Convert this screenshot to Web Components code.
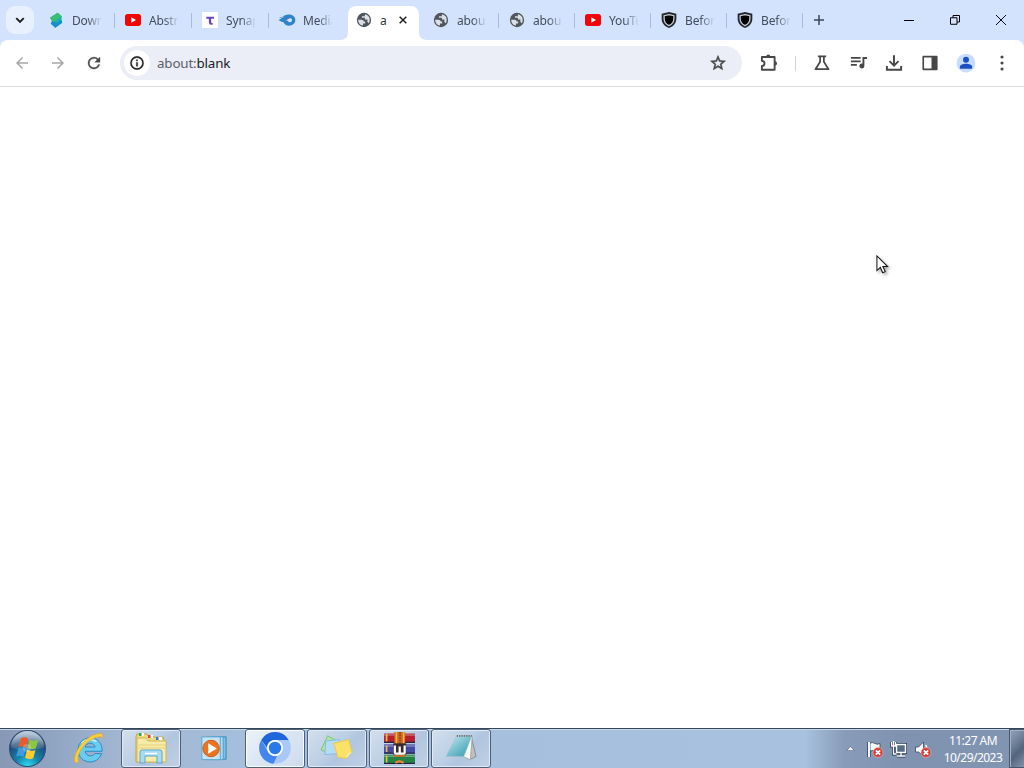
<!DOCTYPE html>
<html lang="en">
<head>
<meta charset="utf-8">
<title>about:blank</title>
<style>
html, body { margin: 0; height: 100%; overflow: hidden; background: #fff; }
body { font-family: "Noto Sans", "Open Sans", sans-serif; }
</style>
</head>
<body>
<desktop-screen></desktop-screen>

<script>
const icons = {
  chevron: `<path d="M7 9.5l5 5 5-5" fill="none" stroke="#1f1f1f" stroke-width="2.6"/>`,
  back: `<path d="M20 11H7.83l5.59-5.59L12 4l-8 8 8 8 1.41-1.41L7.83 13H20v-2z"/>`,
  forward: `<path d="M12 4l-1.41 1.41L16.17 11H4v2h12.17l-5.58 5.59L12 20l8-8z"/>`,
  reload: `<path d="M17.65 6.35A7.96 7.96 0 0 0 12 4a8 8 0 1 0 7.73 10h-2.08A6 6 0 1 1 12 6c1.66 0 3.14.69 4.22 1.78L13 11h7V4z" stroke="currentColor" stroke-width=".4"/>`,
  info: `<path d="M11 7h2v2h-2zm0 4h2v6h-2zm1-9a10 10 0 1 0 0 20 10 10 0 0 0 0-20zm0 18a8 8 0 1 1 0-16 8 8 0 0 1 0 16z" stroke-width=".5" stroke="currentColor"/>`,
  star: `<path d="M22 9.24l-7.19-.62L12 2 9.19 8.63 2 9.24l5.46 4.73L5.82 21 12 17.27 18.18 21l-1.63-7.03zM12 15.4l-3.76 2.27 1-4.28-3.32-2.88 4.38-.38L12 6.1l1.71 4.04 4.38.38-3.32 2.88 1 4.28z" stroke-width=".7" stroke="currentColor"/>`,
  puzzle: `<path d="M2.500 4h17v17h-17v-5q3.500-.5 3.500-3.500T2.500 9z" fill="none" stroke="currentColor" stroke-width="2.500" stroke-linejoin="round"/><path d="M8.300 3.500a2.700 2.700 0 0 1 5.400 0zM20 9.800a2.700 2.700 0 0 1 0 5.400z"/>`,
  flask: `<path d="M6.500 3.200h11M9.500 3.500v6.800L3.300 20.300h17.400L14.500 10.300V3.500" fill="none" stroke="currentColor" stroke-width="2.300" stroke-linejoin="round"/>`,
  queue: `<path d="M2.500 4h13v2.400h-13zM2.500 8.600h13V11h-13zM2.500 13.200h8v2.400h-8zM18 4h6v2.600h-3.500V16a3.300 3.300 0 1 1-2.500-3.200z"/>`,
  download: `<path d="M12 1.500v13.500M6 9.500l6 6 6-6M2.500 16v5h19v-5" fill="none" stroke="currentColor" stroke-width="2.600"/>`,
  panel: `<path d="M3 3.500h18v17H3z" fill="none" stroke="currentColor" stroke-width="2.200" stroke-linejoin="round"/><path d="M14 3h7v18h-7z"/>`,
  profile: `<circle cx="12" cy="12" r="12.500" fill="#c9ddfb"/><circle cx="12" cy="7.600" r="4" fill="#1a50c4"/><path d="M3.800 19.600v-2.400c0-5.500 16.400-5.500 16.400 0v2.400z" fill="#1a50c4"/>`,
  more: `<circle cx="12" cy="4" r="2.100"/><circle cx="12" cy="12" r="2.100"/><circle cx="12" cy="20" r="2.100"/>`,
  plus: `<path d="M12 2v20M2 12h20" stroke="currentColor" stroke-width="3"/>`,
  closeTab: `<path d="M4 4l16 16M20 4L4 20" stroke="#1f1f1f" stroke-width="3.500"/>`,
  minimize: `<path d="M2 13h20" stroke="#000" stroke-width="2"/>`,
  restore: `<path d="M3 7.500h13v13H3zM8 7.500V3h13v13h-5" fill="none" stroke="#000" stroke-width="2"/>`,
  closeWindow: `<path d="M2 2l20 20M22 2L2 22" stroke="#000" stroke-width="1.900"/>`,
  globe: `<circle cx="12" cy="12" r="10.700" fill="#50555e"/><path d="M3.200 11.500h5.300q3 0 3 2.600h2.200v3.200h-3.200v3q-7-1-7.300-8.800z" fill="#dce1e9"/><path d="M13.300 3.500q7.200 1.500 7.300 8.500 0 2.700-1.600 5l-2-2.500.2-3.200h-3.800V8.700H8.900V6.300h4.400z" fill="#dce1e9"/>`,
  softFile: `<path d="M14.500 1l6 5.500-1 5 1 4.500-9.500 7.500-6-6 1-4-3-5z" fill="#16a6b4"/><path d="M14.500 1l6 5.500L8 15.500 3 8.500z" fill="#3cbf72"/><path d="M6 13.500l4 1.500 9.500-6 2 7-10.500 7.500-7-6z" fill="#168fd0"/><path d="M9 15l11.500-8.500-1 5-6 4.500z" fill="#21b39c"/>`,
  youtube: `<rect x="0" y="3" width="24" height="18" rx="4" fill="#f20505"/><path d="M9.500 8l7 4-7 4z" fill="#fff"/>`,
  synapse: `<rect width="24" height="24" rx="1.500" fill="#fff"/><path d="M6.500 7h11.500v3h-4.300V15q0 2 2.300 1.600v2.400q-5.700 1-5.700-3.600V10H6.500z" fill="#6145c1"/>`,
  mediafire: `<path d="M-1 12q4-.5 6-4C8 4 13 3 18 4c4 1 6.500 4 6.500 8 0 5-4 8.500-9.500 8.500-4 0-7-2-8.500-5.500-2 .5-3.500-1-7.500-3z" fill="#2f83c9"/><path d="M9.500 12q3 .5 4.500-1.500c2-2 5.500-1 5.500 1.500 0 3.500-4 4.200-5.500 2.200Q12.500 12.500 9.500 12z" fill="#d3e3fd"/><path d="M1 8.500q4 0 6.500-1" stroke="#6aafe8" stroke-width="2" fill="none"/>`,
  shield: `<path d="M12 0l11 2.500v7.500c0 6.500-4 11-11 14C5 21 1 16.500 1 10V2.500z" fill="#24272d"/><path d="M12 4l7.300 1.500V10c0 5-2.300 8-7.300 10.500C7 18 4.700 15 4.700 10V5.500z" fill="#000" stroke="#c7cfd9" stroke-width="1.900"/>`,

  orb: `<defs><radialGradient id="orbBg" cx=".5" cy="1" r=".95"><stop offset="0" stop-color="#2ee0f0"/><stop offset=".35" stop-color="#1586b0"/><stop offset=".75" stop-color="#1f4a76"/><stop offset="1" stop-color="#7592b2"/></radialGradient><linearGradient id="orbTop" x2="0" y2="1"><stop stop-color="#d5dfeb" stop-opacity=".75"/><stop offset="1" stop-color="#fff" stop-opacity=".05"/></linearGradient></defs>
    <circle cx="18" cy="18" r="17.500" fill="url(#orbBg)" stroke="#304e70"/><path d="M2 17a16 16 0 0 1 32 0q-16 6-32 0z" fill="url(#orbTop)"/>
    <path d="M11.500 8.200Q15 6 18.600 8.400l-2 8.600q-3.500-2.400-7.300-.4z" fill="#ee5a25"/><path d="M20 9.300q4 2.400 8.400.2l-2.200 8.300q-4.200 2-8.200-.4z" fill="#8dc63f"/><path d="M9 18q3.600-2 7.200.3l-2 8q-3.400-2.300-7.200-.5z" fill="#3e9bdd"/><path d="M17.600 19q4 2.400 8.200.4l-2.200 8.200q-4 1.900-8-.6z" fill="#fdca30"/><circle cx="17.500" cy="17.500" r="4" fill="#fff" opacity=".22"/>`,
  explorer: `<path d="M17 5a13 13 0 1 0 12.500 17h-7.200c-2.500 4-10 3-10.300-2.500h18C30.500 11 25 5 17 5zm-5 10c1-5.500 9.500-5.500 10.500 0z" fill="#6accf0" stroke="#2289c7"/><path d="M8 11q6-7 16-2" stroke="#c6efff" stroke-width="1.700" fill="none"/><path d="M1 31C-2 21 13 1 28 .5c3 0 3 3 2.500 5C29 2 20 5 12 12 5 20 3 26 5 31q-2 1.500-4 0z" fill="#f8cf3d" stroke="#d9a01f" stroke-width=".6"/>`,
  folder: `<path d="M2 5l1-3h10l2 3h14l1 3v22H2z" fill="#ecd985" stroke="#c7a445"/><path d="M3 6h9l2 3h18v21H3z" fill="#f7eba8" stroke="#d4b65a"/><path d="M5 2.500h5M14 4.500h5M22 6.500h6" stroke="#fff" stroke-width="3"/><path d="M5 2.500h2.500" stroke="#36a443" stroke-width="3"/><path d="M14 4.500h2.500" stroke="#d6422e" stroke-width="3"/><path d="M22 6.500h2.500" stroke="#3979c9" stroke-width="3"/><path d="M4 13h27M4 16h27" stroke="#e6cf7b"/><path d="M6 31V20q0-2 2-2h18q2 0 2 2v11h-5v-7H11v7z" fill="#a9dcf4" stroke="#56a7d3"/><path d="M11 21.500h12" stroke="#fff" stroke-width="1.500"/>`,
  media: `<path d="M14 4h15v23H14z" fill="#7fbfe0" stroke="#3888b9"/><path d="M10 4h16v23.500H10z" fill="#acdaf0" stroke="#4f9ecb"/><path d="M4 4h19v23.500H4z" fill="#c5e4f3" stroke="#5ba5cd"/><circle cx="13.500" cy="16" r="8.500" fill="#ec7421" stroke="#cb5b18"/><path d="M10.500 10.500l9 5.500-9 5.500z" fill="#fff"/>`,
  chromium: `<circle cx="16" cy="16" r="15.800" fill="#a9c8f8"/><path d="M2.300 8A15.800 15.800 0 0 1 29.700 8H16q-7 0-7.800 8z" fill="#1f66da"/><path d="M2.300 8L9 19.800q3 5 9 4.200L14.500 31.700A15.800 15.800 0 0 1 2.300 8z" fill="#4486ee"/><circle cx="16" cy="16" r="8" fill="#fff"/><circle cx="16" cy="16" r="6.200" fill="#2a79ea"/>`,
  notes: `<path d="M6 3l9 5-6 14-10-4z" fill="#b5e3a6" stroke="#79c274"/><path d="M4 8.500l14-1.500 1 15L3 23z" fill="#b5dcf5" stroke="#80bce2"/><path d="M12.500 11l16-4 3.500 13q-4 3-6 7L17 26z" fill="#fae268" stroke="#e8c84a"/><path d="M26 27q0-5 6-7z" fill="#fff2a5"/>`,
  archive: `<path d="M1 1.500h30v9H1z" fill="#b5202f"/><path d="M1 12h30v9H1z" fill="#454aa6"/><path d="M1 22h30v9H1z" fill="#218348"/><path d="M1 3h30M1 13.500h30M1 23.500h30" stroke="#fff" stroke-opacity=".32" stroke-width="1.500"/><path d="M1 10h30M1 20.500h30M1 30.500h30" stroke="#272442" stroke-width="1.300"/><path d="M3.500 2v7M3.500 13v6.500M3.500 23v6.500" stroke="#e9c043" stroke-width="1.600"/><path d="M11 0h10.500v12H11zM11 22h10.500v2H11z" fill="#d06a22"/><path d="M13 0v12M20 0v12" stroke="#efb44a" stroke-width="1.500"/><path d="M16.500 0v12" stroke="#642615" stroke-dasharray="1.500 1"/><path d="M10 11h12.500v11H10z" fill="#3a2b30"/><path d="M11.500 13v7q0 1 1 1h7.500q1 0 1-1v-7M16.200 14v6" stroke="#fff" stroke-width="2.200" fill="none"/><path d="M12 30q4-3 8 0" stroke="#e9882d" stroke-width="2.200" fill="none"/>`,
  notepad: `<defs><linearGradient id="pad" x2="1" y2="1"><stop stop-color="#cdeaee"/><stop offset=".65" stop-color="#5fb4c4"/><stop offset="1" stop-color="#3b9cb0"/></linearGradient></defs><path d="M27 4l5 21-6 3z" fill="#bfc0bf" stroke="#888"/><path d="M14 3.500h14l-2 25-7-3z" fill="#f8f8f5" stroke="#aaa"/><path d="M11 3.500h16.500L19 25H0z" fill="url(#pad)" stroke="#a5c4ca" stroke-width=".6"/><path d="M11.500 3h16" stroke="#686b70" stroke-width="2" stroke-dasharray="1.300 1.200"/>`,
  trayUp: `<path d="M2 17l10-10 10 10z" fill="#fff" stroke="#4a5870" stroke-width="1.500"/>`,
  flag: `<path d="M2 1v15" stroke="#35465c" stroke-width="3.500"/><path d="M3 2q3-1 5 .5t5 0v7.500q-3 1-5 0t-5 0z" fill="#f8fafc" stroke="#35465c" stroke-width=".8"/><path d="M2 1v15" stroke="#fff" stroke-width="1.900"/><circle cx="11" cy="11.500" r="5" fill="#d6403a" stroke="#ecb3ae" stroke-width=".6"/><path d="M8.800 9.300l4.400 4.400M13.200 9.300l-4.400 4.400" stroke="#fff" stroke-width="1.700"/>`,
  network: `<path d="M5.500 3.500h9v8h-9zM10 12v3M6 15h8.500M2.500 5v8h3M.5 1v4h4V1" stroke="#26364c" stroke-width="3" fill="none"/><path d="M5.500 3.500h9v8h-9z" fill="#566d89" stroke="#fff" stroke-width="1.500"/><path d="M10 12v3M6 15h8.500M2.500 5v8h3M.5 1v4h4V1M2.500 0v5" stroke="#fff" stroke-width="1.400" fill="none"/>`,
  sound: `<path d="M.5 6h3l5-5v14l-5-4h-3z" fill="#f7f9fb" stroke="#35465c" stroke-width=".8"/><path d="M10.500 4q2 2 1 5" stroke="#fff" stroke-width="1.300" fill="none"/><circle cx="11" cy="11.500" r="5" fill="#d6403a" stroke="#ecb3ae" stroke-width=".6"/><path d="M8.800 9.300l4.400 4.400M13.200 9.300l-4.400 4.400" stroke="#fff" stroke-width="1.700"/>`,
  cursor: `<path d="M1 1v16l3.700-3.500 2.600 5.700 2.700-1.200-2.600-5.500h5.200z" fill="#fff" stroke="#111" stroke-width="1.100"/>`
}

class UiIcon extends HTMLElement {
  connectedCallback() {
    const root = this.attachShadow({ mode: "open" })
    root.innerHTML = `
      <style>
        :host { display: block; flex: none; width: ${this.getAttribute("size") || 18}px; }
        svg { display: block; width: 100%; overflow: visible; }
      </style>
      <svg viewBox="${this.getAttribute("box") || "0 0 24 24"}" fill="currentColor">${icons[this.getAttribute("name")]}</svg>`
  }
}
customElements.define("ui-icon", UiIcon)

class BrowserTab extends HTMLElement {
  connectedCallback() {
    const root = this.attachShadow({ mode: "open" })
    const active = this.hasAttribute("active")
    root.innerHTML = `
      <style>
        :host { display: flex; flex: none; width: 76px; align-items: center; height: 34px; margin-top: 6px; box-sizing: border-box; padding: 0 0 6px 10px; gap: 8px; position: relative; color: #454c5a; }
        :host(:nth-child(-n+5)) { width: 77px; }
        .title { width: 30px; padding-top: 1px; overflow: hidden; white-space: nowrap; font-size: 12px; line-height: 18px; letter-spacing: -.15px; -webkit-mask-image: linear-gradient(90deg, #000 50%, transparent); }
        .sep { position: absolute; right: 0; top: 7px; width: 1px; height: 15px; background: #a8bddb; }
        :host([active]) { color: #30343a; }
        :host([active]) .title { width: 7px; -webkit-mask-image: none; }
        .close { margin-left: 3px; }
        .shape { position: absolute; left: -6px; top: 0; z-index: -1; }
      </style>
      ${active ? `<svg class="shape" width="87" height="34"><path d="M0 34Q8 34 8 26V9Q8 0 17 0H70Q79 0 79 9V26Q79 34 87 34z" fill="#fff"/></svg>` : ""}
      <ui-icon name="${this.getAttribute("icon")}" size="16"></ui-icon>
      <span class="title"><slot></slot></span>
      ${active ? `<ui-icon class="close" name="closeTab" size="10"></ui-icon>` : ""}
      ${this.hasAttribute("sep") ? `<i class="sep"></i>` : ""}`
  }
}
customElements.define("browser-tab", BrowserTab)

class TabStrip extends HTMLElement {
  connectedCallback() {
    const root = this.attachShadow({ mode: "open" })
    root.innerHTML = `
      <style>
        :host { display: flex; height: 40px; background: #d3e3fd; isolation: isolate; }
        .search { display: grid; place-items: center; width: 28px; height: 28px; margin: 6px 4px 0 6px; border-radius: 9px; background: #e8f0fe; }
        .tabs { display: flex; width: 765px; }
        .add { margin: 14px 0 0 10px; color: #3d4657; }
        .window { display: flex; margin-left: auto; padding: 14px 17px 0 0; gap: 34px; }
      </style>
      <div class="search"><ui-icon name="chevron" size="18"></ui-icon></div>
      <div class="tabs">
        <browser-tab icon="softFile" sep>Down</browser-tab>
        <browser-tab icon="youtube" sep>Abstr</browser-tab>
        <browser-tab icon="synapse" sep>Synap</browser-tab>
        <browser-tab icon="mediafire">Media</browser-tab>
        <browser-tab icon="globe" active>a</browser-tab>
        <browser-tab icon="globe" sep>abou</browser-tab>
        <browser-tab icon="globe" sep>abou</browser-tab>
        <browser-tab icon="youtube" sep>YouTu</browser-tab>
        <browser-tab icon="shield" sep>Befor</browser-tab>
        <browser-tab icon="shield" sep>Befor</browser-tab>
      </div>
      <ui-icon class="add" name="plus" size="12"></ui-icon>
      <div class="window">
        <ui-icon name="minimize" size="12"></ui-icon>
        <ui-icon name="restore" size="12"></ui-icon>
        <ui-icon name="closeWindow" size="12"></ui-icon>
      </div>`
  }
}
customElements.define("tab-strip", TabStrip)

class BrowserToolbar extends HTMLElement {
  connectedCallback() {
    const root = this.attachShadow({ mode: "open" })
    root.innerHTML = `
      <style>
        :host { display: block; background: #d3e3fd; }
        .bar { display: flex; align-items: center; box-sizing: border-box; height: 47px; padding: 0 12px 0 13px; background: #fff; border-bottom: 1px solid #dcdfe2; border-radius: 8px 8px 0 0; color: #474747; }
        .nav { display: flex; gap: 18px; }
        .off { color: #a6a6a6; }
        .omni { display: flex; align-items: center; box-sizing: border-box; width: 622px; height: 34px; margin-left: 17px; padding: 0 15px 0 4px; border-radius: 17px; background: #ebedf7; }
        .chip { display: grid; place-items: center; width: 26px; height: 26px; border-radius: 50%; background: #fff; color: #202124; }
        .url { flex: 1; margin-left: 7px; font-size: 13.400px; letter-spacing: -.18px; line-height: 20px; color: #5c6067; }
        .url b { font-weight: 400; color: #202124; }
        .actions { display: flex; align-items: center; margin-left: 18px; gap: 18px; }
        .line { width: 1px; height: 15px; margin: 0 -1px 0 -1px; background: #c9d3e2; }
      </style>
      <div class="bar">
        <div class="nav">
          <ui-icon class="off" name="back"></ui-icon>
          <ui-icon class="off" name="forward"></ui-icon>
          <ui-icon name="reload"></ui-icon>
        </div>
        <div class="omni">
          <span class="chip"><ui-icon name="info" size="16"></ui-icon></span>
          <span class="url">about:<b>blank</b></span>
          <ui-icon name="star"></ui-icon>
        </div>
        <div class="actions">
          <ui-icon name="puzzle"></ui-icon>
          <i class="line"></i>
          <ui-icon name="flask"></ui-icon>
          <ui-icon name="queue"></ui-icon>
          <ui-icon name="download"></ui-icon>
          <ui-icon name="panel"></ui-icon>
          <ui-icon name="profile"></ui-icon>
          <ui-icon name="more"></ui-icon>
        </div>
      </div>`
  }
}
customElements.define("browser-toolbar", BrowserToolbar)

class TaskButton extends HTMLElement {
  connectedCallback() {
    const root = this.attachShadow({ mode: "open" })
    root.innerHTML = `
      <style>
        :host { display: grid; place-items: center; box-sizing: border-box; width: 60px; height: 39px; padding-bottom: 1px; border: 1px solid transparent; border-radius: 3px; }
        :host([open]) { border-color: #4d6078; background: linear-gradient(135deg, #d3dfed, #bccfe5 45%, #b0c5df 60%, #c0d1e5); box-shadow: inset 0 0 0 1px #e2ebf5; }
        :host([front]) { background: linear-gradient(135deg, #edf2f9, #d9e5f3 50%, #cddcf0); box-shadow: inset 0 0 0 1px #fafcff; }
      </style>
      <slot></slot>`
  }
}
customElements.define("task-button", TaskButton)

class TaskBar extends HTMLElement {
  connectedCallback() {
    const root = this.attachShadow({ mode: "open" })
    root.innerHTML = `
      <style>
        :host { display: flex; box-sizing: border-box; height: 40px; border-top: 1px solid #34465a; box-shadow: inset 0 1px #c8d9ea; background: linear-gradient(90deg, #8798b5 0, #92a7c5 60px, #a2b6d2 120px, #a5bedb 240px, #a7c1de 805px, #889bb9 845px, #7f92b0 900px, #8196b3 1024px); }
        .start { display: grid; place-items: center; width: 54px; padding-bottom: 1px; }
        .apps { display: flex; gap: 2px; margin-left: 5px; }
        .tray { display: flex; align-items: center; margin-left: auto; gap: 8px; }
        .up { margin-right: 4px; }
        .clock { width: 66px; margin-left: 1px; text-align: center; white-space: nowrap; font-size: 12px; line-height: 17px; letter-spacing: -.52px; color: #fff; }
        .peek { box-sizing: border-box; width: 15px; margin-left: 3px; border: 1px solid #46566c; border-right: 0; background: linear-gradient(135deg, #93a4b9, #6b7c95 40%, #52637c 60%, #8293ab); box-shadow: inset 1px 1px #a3b3c5; }
      </style>
      <div class="start"><ui-icon name="orb" box="0 0 36 36" size="37"></ui-icon></div>
      <div class="apps">
        <task-button><ui-icon name="explorer" box="0 0 32 32" size="30"></ui-icon></task-button>
        <task-button open><ui-icon name="folder" box="0 0 34 32" size="34"></ui-icon></task-button>
        <task-button><ui-icon name="media" box="0 0 32 32" size="31"></ui-icon></task-button>
        <task-button open front><ui-icon name="chromium" box="0 0 32 32" size="32"></ui-icon></task-button>
        <task-button open><ui-icon name="notes" box="0 0 32 32" size="30"></ui-icon></task-button>
        <task-button open><ui-icon name="archive" box="0 0 32 32" size="33"></ui-icon></task-button>
        <task-button open><ui-icon name="notepad" box="0 0 32 32" size="30"></ui-icon></task-button>
      </div>
      <div class="tray">
        <ui-icon class="up" name="trayUp" size="9"></ui-icon>
        <ui-icon name="flag" box="0 0 16 16" size="16"></ui-icon>
        <ui-icon name="network" box="0 0 16 16" size="16"></ui-icon>
        <ui-icon name="sound" box="0 0 16 16" size="16"></ui-icon>
        <div class="clock">11:27 AM<br>10/29/2023</div>
      </div>
      <div class="peek"></div>`
  }
}
customElements.define("task-bar", TaskBar)

class DesktopScreen extends HTMLElement {
  connectedCallback() {
    const root = this.attachShadow({ mode: "open" })
    root.innerHTML = `
      <style>
        :host { display: flex; flex-direction: column; position: relative; height: 100vh; }
        main { flex: 1; background: #fff; }
        .pointer { position: absolute; left: 876px; top: 255px; filter: drop-shadow(2px 2px 1.500px #0005); }
      </style>
      <tab-strip></tab-strip>
      <browser-toolbar></browser-toolbar>
      <main></main>
      <task-bar></task-bar>
      <ui-icon class="pointer" name="cursor" box="0 0 13 20" size="12"></ui-icon>`
  }
}
customElements.define("desktop-screen", DesktopScreen)
</script>
</body>
</html>
